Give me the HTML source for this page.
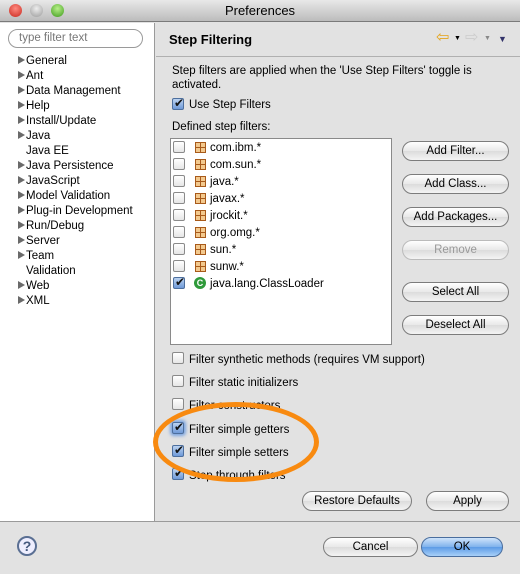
<!DOCTYPE html><html><head><style>
*{margin:0;padding:0;box-sizing:border-box}
body{width:520px;height:574px;overflow:hidden;font-family:"Liberation Sans",sans-serif;font-size:11.5px;color:#000;background:#e2e2e2;position:relative}
.a{position:absolute;white-space:nowrap}
.t{margin-top:3px}
.tb{left:0;top:0;width:520px;height:22px;background:linear-gradient(#e8e8e8,#bcbcbc);border-bottom:1px solid #7a7a7a;text-align:center;font-size:13px;line-height:22px}
.dot{width:13px;height:13px;border-radius:50%;top:4px}
.btn{height:20px;border:1px solid #7c7c7c;border-radius:10px;background:linear-gradient(#fff,#e8e8e8 50%,#dcdcdc 51%,#f4f4f4);text-align:center;line-height:18px;font-size:11.5px}
.cb{width:12px;height:12px;border:1px solid #8a8a8a;border-radius:2px;background:linear-gradient(#fff,#e6e6e6)}
.cb.on{background:linear-gradient(#bcd3f0,#6f9ad8);border-color:#4d6f9e}
.cb.on::after{content:"✔";position:absolute;left:1px;top:-3px;font-size:12px;color:#111}
.tri{width:0;height:0;border-left:7px solid #6a6a6a;border-top:4px solid transparent;border-bottom:4px solid transparent}
.pk{width:11px;height:11px;border:1px solid #a85a1a;background:
linear-gradient(90deg,transparent 4px,#a85a1a 4px,#a85a1a 5px,transparent 5px),linear-gradient(transparent 4px,#a85a1a 4px,#a85a1a 5px,transparent 5px),#f3c98e}
</style></head><body>
<div class="a tb">Preferences</div>
<div class="a dot" style="left:9px;background:radial-gradient(circle at 50% 35%,#ff8a80,#c8281e)"></div>
<div class="a dot" style="left:30px;background:radial-gradient(circle at 50% 35%,#eee,#9a9a9a)"></div>
<div class="a dot" style="left:51px;background:radial-gradient(circle at 50% 35%,#b8f08a,#3e9a1c)"></div>
<div class="a" style="left:0;top:23px;width:155px;height:498px;background:#fff;border-right:1px solid #9a9a9a"></div>
<div class="a" style="left:8px;top:29px;width:135px;height:19px;border:1px solid #9a9a9a;border-radius:10px;background:#fff;color:#777;padding-left:10px;line-height:17px">type filter text</div>
<div class="a" style="left:0;top:521px;width:520px;height:1px;background:#9a9a9a"></div>
<div class="a" style="left:156px;top:56px;width:364px;height:1px;background:#b0b0b0"></div>
<div class="a" style="left:169px;top:32px;font-size:13px;font-weight:bold">Step Filtering</div>
<div class="a" style="left:436px;top:30px;color:#e4a41c;font-size:16px;line-height:16px">⇦</div>
<div class="a" style="left:454px;top:35px;font-size:7px">▼</div>
<div class="a" style="left:465px;top:30px;color:#ccc;font-size:16px;line-height:16px">⇨</div>
<div class="a" style="left:484px;top:35px;font-size:7px;color:#888">▼</div>
<div class="a" style="left:498px;top:34px;font-size:9px;color:#33336a">▼</div>
<div id="tree"></div>
<div class="a" style="left:172px;top:64px;line-height:14px">Step filters are applied when the 'Use Step Filters' toggle is<br>activated.</div>
<div class="a cb on" style="left:172px;top:98px"></div><div class="a" style="left:189px;top:99px">Use Step Filters</div>
<div class="a" style="left:172px;top:121px">Defined step filters:</div>
<div class="a" style="left:170px;top:138px;width:222px;height:207px;background:#fff;border:1px solid #8a8a8a"></div>
<div id="list"></div>
<div class="a btn" style="left:402px;top:141px;width:107px">Add Filter...</div>
<div class="a btn" style="left:402px;top:174px;width:107px">Add Class...</div>
<div class="a btn" style="left:402px;top:207px;width:107px">Add Packages...</div>
<div class="a btn" style="left:402px;top:240px;width:107px;color:#999;border-color:#bbb">Remove</div>
<div class="a btn" style="left:402px;top:282px;width:107px">Select All</div>
<div class="a btn" style="left:402px;top:315px;width:107px">Deselect All</div>
<div class="a cb" style="left:172px;top:352px"></div><div class="a t" style="left:189px;top:351px">Filter synthetic methods (requires VM support)</div>
<div class="a cb" style="left:172px;top:375px"></div><div class="a t" style="left:189px;top:374px">Filter static initializers</div>
<div class="a cb" style="left:172px;top:398px"></div><div class="a t" style="left:189px;top:397px">Filter constructors</div>
<div class="a cb on" style="left:172px;top:422px;box-shadow:0 0 3px 2px #7aa4e0"></div><div class="a t" style="left:189px;top:421px">Filter simple getters</div>
<div class="a cb on" style="left:172px;top:445px"></div><div class="a t" style="left:189px;top:444px">Filter simple setters</div>
<div class="a cb on" style="left:172px;top:468px"></div><div class="a t" style="left:189px;top:467px">Step through filters</div>
<div class="a" style="left:153px;top:402px;width:166px;height:80px;border:5px solid #f88a10;border-radius:50%"></div>
<div class="a btn" style="left:302px;top:491px;width:110px">Restore Defaults</div>
<div class="a btn" style="left:426px;top:491px;width:83px">Apply</div>
<div class="a btn" style="left:323px;top:537px;width:95px">Cancel</div>
<div class="a btn" style="left:421px;top:537px;width:82px;background:linear-gradient(#cfe4fb,#7fb2ec 50%,#5c9be6 51%,#a8d0f8);border-color:#4a6e9e">OK</div>
<div class="a" style="left:17px;top:536px;width:20px;height:20px;border:2px solid #5a6f93;border-radius:50%;background:#eef;text-align:center;line-height:16px;font-weight:bold;font-size:14px;color:#44597e">?</div>
<script>
var t=[["General",1],["Ant",1],["Data Management",1],["Help",1],["Install/Update",1],["Java",1],["Java EE",0],["Java Persistence",1],["JavaScript",1],["Model Validation",1],["Plug-in Development",1],["Run/Debug",1],["Server",1],["Team",1],["Validation",0],["Web",1],["XML",1]],h="";
t.forEach(function(e,i){var y=53+i*15;if(e[1])h+='<div class="a tri" style="left:18px;top:'+(y+3)+'px"></div>';h+='<div class="a" style="left:26px;top:'+(y+2)+'px">'+e[0]+'</div>';});
document.getElementById("tree").innerHTML=h;
var l=["com.ibm.*","com.sun.*","java.*","javax.*","jrockit.*","org.omg.*","sun.*","sunw.*"];h="";
l.forEach(function(n,i){var y=141+i*17;h+='<div class="a cb" style="left:173px;top:'+y+'px"></div><div class="a pk" style="left:195px;top:'+(y+1)+'px"></div><div class="a" style="left:210px;top:'+(y+1)+'px">'+n+'</div>';});
var y=141+8*17;h+='<div class="a cb on" style="left:173px;top:'+y+'px"></div><div class="a" style="left:194px;top:'+y+'px;width:12px;height:12px;border-radius:50%;background:#2f9a3a;color:#fff;font-size:9px;font-weight:bold;text-align:center;line-height:12px">C</div><div class="a" style="left:210px;top:'+(y+1)+'px">java.lang.ClassLoader</div>';
document.getElementById("list").innerHTML=h;
</script>
</body></html>
